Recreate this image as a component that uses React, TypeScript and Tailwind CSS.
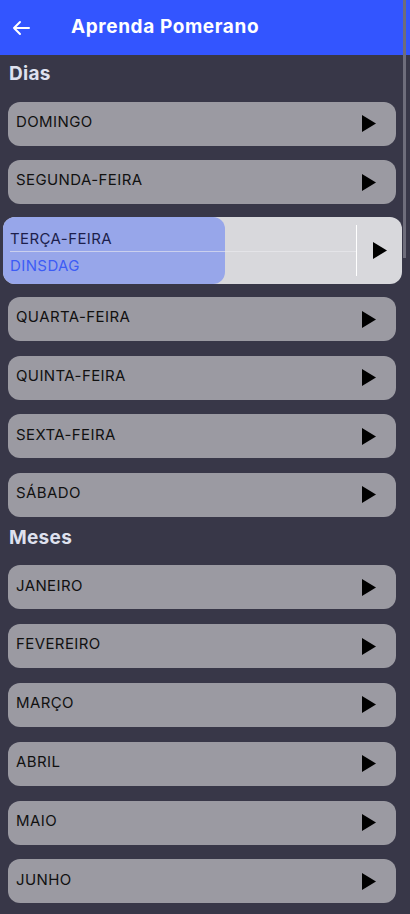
import React from "react"

const dias = ["DOMINGO", "SEGUNDA-FEIRA", "TERÇA-FEIRA", "QUARTA-FEIRA", "QUINTA-FEIRA", "SEXTA-FEIRA", "SÁBADO"]
const meses = ["JANEIRO", "FEVEREIRO", "MARÇO", "ABRIL", "MAIO", "JUNHO"]

const Play = () => (
  <svg width="14" height="17" viewBox="0 0 14 17" className="shrink-0">
    <polygon points="0,0 14,8.5 0,17" fill="#000" />
  </svg>
)

const Row = ({ label }: { label: string }) => (
  <div className="ml-2 mr-[14px] flex h-[44px] items-center justify-between rounded-[12px] bg-[#9b9aa2] pl-2 pr-5">
    <span className="pb-[3px] text-[15px] tracking-[0.4px] text-[#111]">{label}</span>
    <Play />
  </div>
)

const ActiveRow = () => (
  <div className="relative ml-[3px] mr-[8px] flex h-[67px] overflow-hidden rounded-[12px] bg-[#d8d8dc]">
    <div className="absolute left-0 top-0 h-full w-[222px] rounded-r-[12px] bg-[#97a6ea]" />
    <div className="relative flex flex-1 flex-col pl-[7px] pt-[10px]">
      <span className="text-[15px] leading-[24px] tracking-[0.4px] text-[#1d1f4c]">TERÇA-FEIRA</span>
      <div className="h-px w-full bg-[#ececf0]/60" />
      <span className="pt-[2px] text-[15px] leading-[24px] tracking-[0.4px] text-[#3d5cf5]">DINSDAG</span>
    </div>
    <div className="relative my-[8px] w-px bg-white" />
    <div className="relative flex w-[45px] items-center justify-center">
      <Play />
    </div>
  </div>
)

export default function App() {
  return (
    <div
      className="relative h-[914px] w-[410px] overflow-hidden bg-[#383748]"
      style={{ fontFamily: "Inter, 'Noto Sans', sans-serif" }}
    >
      <header className="flex h-[55px] items-center bg-[#3355ff] pl-[12px]">
        <svg width="18" height="16" viewBox="0 0 18 16" fill="none" stroke="#fff" strokeWidth="2" strokeLinecap="round" strokeLinejoin="round">
          <path d="M17 8H2M8 2L2 8l6 6" />
        </svg>
        <h1 className="ml-[41px] text-[19px] font-bold tracking-[0.6px] text-white">Aprenda Pomerano</h1>
      </header>

      <h2 className="px-[9px] pt-[5px] text-[19px] font-bold tracking-[0.3px] text-[#dfe1ee]">Dias</h2>
      <div className="mt-[13px] flex flex-col gap-[14.6px]">
        <Row label={dias[0]} />
        <Row label={dias[1]} />
        <div className="-my-[1.6px]">
          <ActiveRow />
        </div>
        {dias.slice(3).map((d) => (
          <Row key={d} label={d} />
        ))}
      </div>

      <h2 className="px-[9px] pt-[7px] text-[19px] font-bold tracking-[0.3px] text-[#dfe1ee]">Meses</h2>
      <div className="mt-[13px] flex flex-col gap-[14.8px]">
        {meses.map((m) => (
          <Row key={m} label={m} />
        ))}
      </div>

      <div className="absolute right-[4px] top-0 h-[258px] w-[3px] bg-[#6e6d7b]" />
    </div>
  )
}
